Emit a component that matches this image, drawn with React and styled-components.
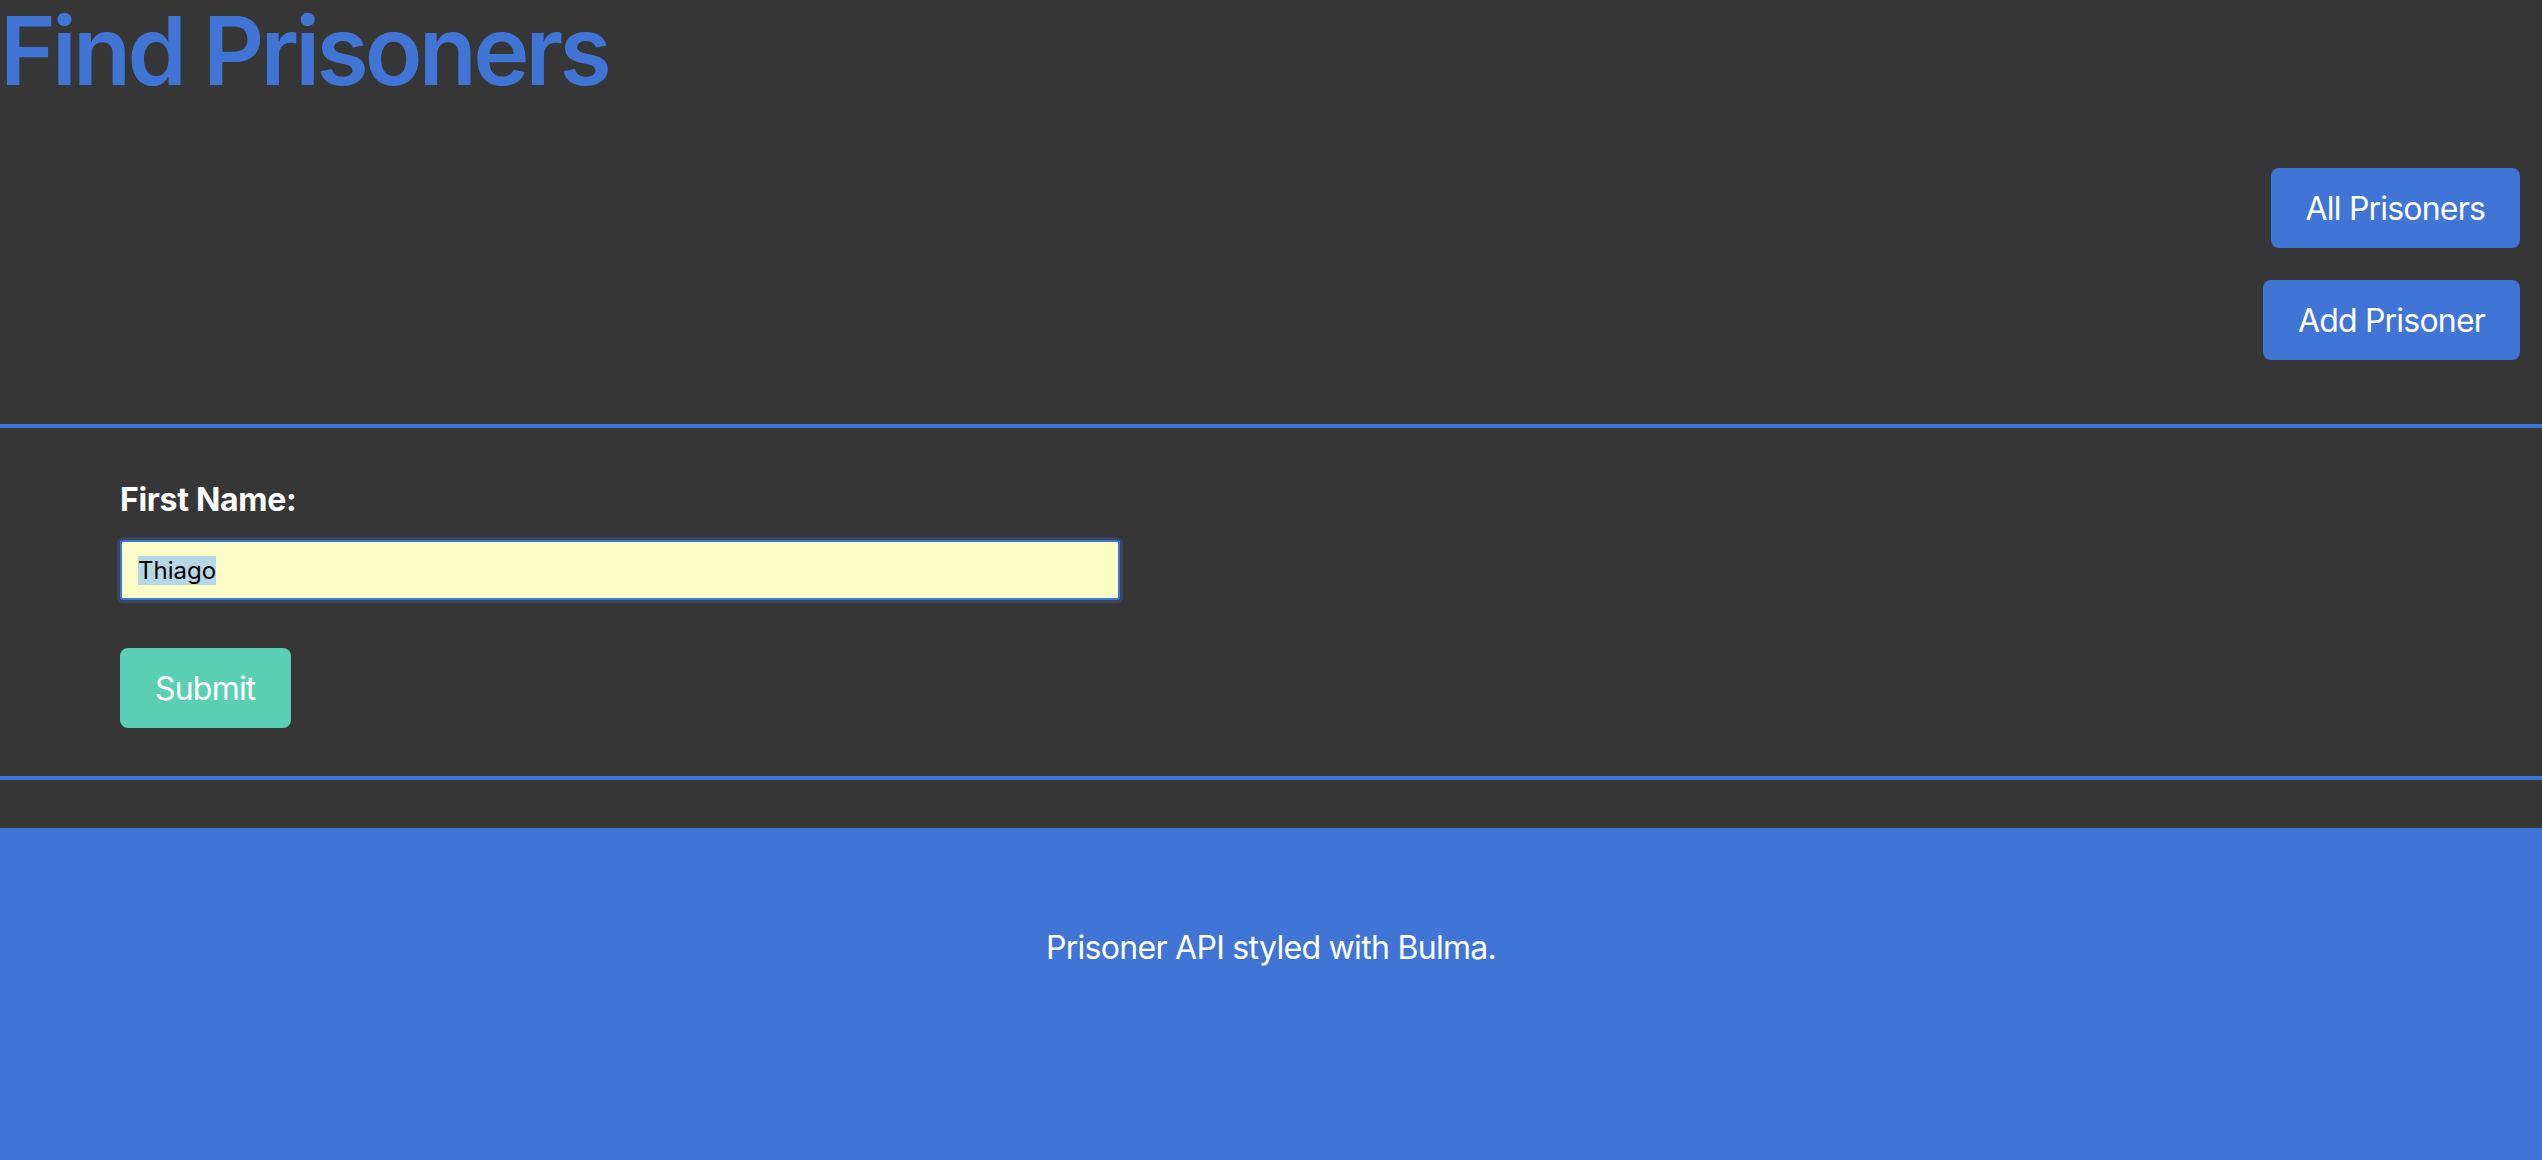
import React, { useEffect, useRef } from 'react';
import styled, { createGlobalStyle } from 'styled-components';

const blue = '#4075d6';

const GlobalStyle = createGlobalStyle`
    html, body {
        margin: 0;
        padding: 0;
        background: #363636;
        font-family: Inter, "Noto Sans", "Liberation Sans", sans-serif;
        color: #fff;
    }
    * {
        box-sizing: border-box;
    }
`;

const Page = styled.div`
    min-height: 1160px;
    display: flex;
    flex-direction: column;
`;

const Header = styled.header`
    display: flex;
    flex-direction: column;
`;

const Title = styled.h1`
    margin: 0;
    font-size: 95px;
    font-weight: 600;
    line-height: 102px;
    letter-spacing: -3.8px;
    color: ${blue};
`;

const Nav = styled.nav`
    display: flex;
    flex-direction: column;
    align-items: flex-end;
    gap: 32px;
    padding: 66px 22px 64px 0;
`;

const Button = styled.button`
    height: 80px;
    padding: 0 34px;
    border: 1px solid transparent;
    border-radius: 8px;
    font-family: inherit;
    font-size: 32px;
    font-weight: 400;
    letter-spacing: -0.8px;
    color: #fff;
    background: ${p => (p.$variant === 'primary' ? '#5acfb4' : blue)};
    cursor: pointer;
`;

const Rule = styled.hr`
    margin: 0;
    height: 4px;
    border: none;
    background: ${blue};
`;

const Form = styled.form`
    display: flex;
    flex-direction: column;
    align-items: flex-start;
    padding: 48px 120px;
`;

const Label = styled.label`
    font-size: 32px;
    font-weight: 700;
    line-height: 48px;
    letter-spacing: -0.3px;
    margin-bottom: 16px;
`;

const Input = styled.input`
    width: 1000px;
    height: 60px;
    padding: 0 16px;
    border: 2px solid ${blue};
    border-radius: 3px;
    background: #fafdc7;
    box-shadow: 0 0 0 3px rgba(64, 117, 214, 0.25);
    font-family: inherit;
    font-size: 24px;
    color: #000;
    outline: none;
    margin-bottom: 48px;
    &::selection {
        background: #b6d7e5;
        color: #000;
    }
`;

const Footer = styled.footer`
    flex: 1;
    margin-top: 48px;
    background: ${blue};
    padding: 96px 24px 192px;
    text-align: center;
    font-size: 32px;
    line-height: 48px;
    letter-spacing: -0.7px;
    color: #fff;
`;

export default function App() {
    const inputRef = useRef(null);

    useEffect(() => {
        if (inputRef.current) {
            inputRef.current.focus();
            inputRef.current.select();
        }
    }, []);

    return (
        <Page>
            <GlobalStyle />
            <Header>
                <Title>Find Prisoners</Title>
                <Nav>
                    <Button>All Prisoners</Button>
                    <Button>Add Prisoner</Button>
                </Nav>
            </Header>
            <Rule />
            <Form onSubmit={ev => ev.preventDefault()}>
                <Label htmlFor="firstName">First Name:</Label>
                <Input id="firstName" ref={inputRef} defaultValue="Thiago" />
                <Button type="submit" $variant="primary">Submit</Button>
            </Form>
            <Rule />
            <Footer>Prisoner API styled with Bulma.</Footer>
        </Page>
    );
}
